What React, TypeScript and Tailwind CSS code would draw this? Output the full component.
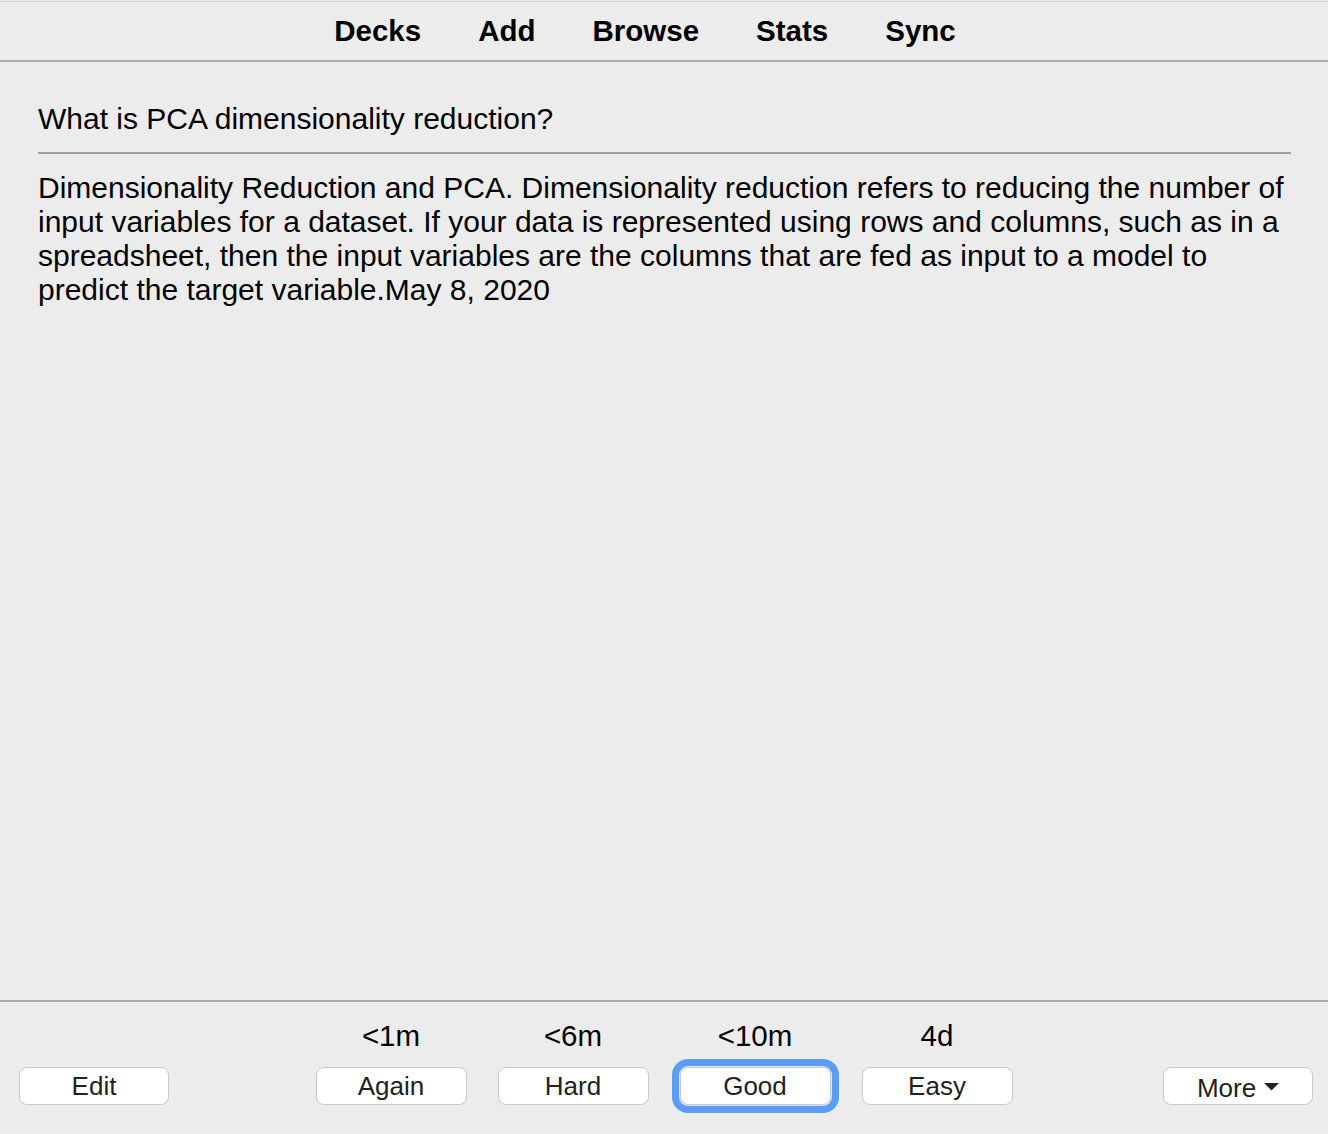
import React from "react";

const font = { fontFamily: '"Liberation Sans", Arial, Helvetica, sans-serif' };

function Btn({ children, focused = false, className = "" }: { children: React.ReactNode; focused?: boolean; className?: string }) {
  return (
    <button
      className={
        "h-[38px] rounded-[8px] border border-[#c9c9c9] bg-white text-[26px] leading-none text-[#222] flex items-center justify-center " +
        (focused ? "shadow-[0_0_0_1px_#d9e7fc,0_0_0_8px_#5b9cf4] " : "") +
        className
      }
    >
      {children}
    </button>
  );
}

export default function App() {
  const answers = [
    { label: "<1m", text: "Again" },
    { label: "<6m", text: "Hard" },
    { label: "<10m", text: "Good", focused: true },
    { label: "4d", text: "Easy" },
  ];
  return (
    <div className="w-full h-[1134px] bg-[#ececec] flex flex-col text-black overflow-hidden" style={font}>
      <div className="h-px mt-px bg-[#d2d2d2]" />
      <nav className="h-[60px] border-b-2 border-[#a9a9a9] flex items-center justify-center gap-[57px] pr-[38px] pt-[1px] text-[29.5px] font-bold">
        <span>Decks</span>
        <span>Add</span>
        <span>Browse</span>
        <span>Stats</span>
        <span>Sync</span>
      </nav>
      <main className="flex-1 pl-[38px] pr-[37px] pt-[40px]">
        <div className="text-[30px] leading-[34px]">What is PCA dimensionality reduction?</div>
        <div className="mt-[16px] h-[2px] bg-[#a0a0a0]" />
        <div className="mt-[17px] text-[30px] leading-[34px]">
          Dimensionality Reduction and PCA. Dimensionality reduction refers to reducing the number of input variables for a dataset. If your data is represented using rows and columns, such as in a spreadsheet, then the input variables are the columns that are fed as input to a model to predict the target variable.May 8, 2020
        </div>
      </main>
      <footer className="h-[134px] border-t-2 border-[#aaaaaa] grid grid-cols-[1fr_auto_1fr] pb-[29px]">
        <div className="flex items-end pl-[19px]">
          <Btn className="w-[150px]">Edit</Btn>
        </div>
        <div className="flex gap-[31px] pt-[17px]">
          {answers.map((a) => (
            <div key={a.text} className="flex flex-col items-center">
              <div className="text-[29.5px] leading-[34px] h-[34px]">{a.label}</div>
              <div className="mt-[14px]">
                <Btn focused={a.focused} className="w-[151px]">{a.text}</Btn>
              </div>
            </div>
          ))}
        </div>
        <div className="flex items-end justify-end pr-[15px]">
          <Btn className="w-[150px] pt-[3px]">
            <span>More</span>
            <svg width="15" height="8" viewBox="0 0 15 8" className="ml-[8px] mt-[-2px]">
              <path d="M0 0 H15 L7.5 7.5 Z" fill="#222" />
            </svg>
          </Btn>
        </div>
      </footer>
    </div>
  );
}
